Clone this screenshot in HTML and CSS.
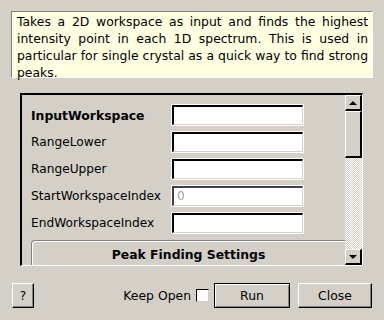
FILE: index.html
```html
<!DOCTYPE html>
<html lang="en">
<head>
    <meta charset="UTF-8">
    <title>FindPeaks dialog</title>
    <link rel="stylesheet" href="styles.css">
</head>
<body>

<div class="dialog">
    <div class="desc">
        Takes a 2D workspace as input and finds the highest intensity point in each 1D spectrum. This is used in particular for single crystal as a quick way to find strong peaks.
    </div>

    <div class="panel">
        <div class="rows">
            <div class="row">
                <label class="bold">InputWorkspace</label>
                <div class="field"></div>
            </div>
            <div class="row">
                <label>RangeLower</label>
                <div class="field"></div>
            </div>
            <div class="row">
                <label>RangeUpper</label>
                <div class="field"></div>
            </div>
            <div class="row">
                <label>StartWorkspaceIndex</label>
                <div class="field placeholder">0</div>
            </div>
            <div class="row">
                <label>EndWorkspaceIndex</label>
                <div class="field"></div>
            </div>
            <div class="group">
                <div class="group-title">Peak Finding Settings</div>
            </div>
        </div>
        <div class="scrollbar">
            <div class="arrow up"><span></span></div>
            <div class="thumb"></div>
            <div class="track"></div>
            <div class="arrow down"><span></span></div>
        </div>
    </div>

    <div class="footer">
        <button class="btn help">?</button>
        <div class="spacer"></div>
        <span class="keep">Keep Open</span>
        <span class="check"></span>
        <button class="btn default">Run</button>
        <button class="btn close">Close</button>
    </div>
</div>

</body>
</html>
```

FILE: styles.css
```css
body {
    margin: 0;
    background: #d4d0c8;
    font-family: "DejaVu Sans", sans-serif;
    font-size: 12px;
    color: #000;
}
.dialog {
    width: 384px;
    height: 320px;
    padding: 11px 0 0 11px;
    box-sizing: border-box;
}
.desc {
    width: 362px;
    height: 67px;
    box-sizing: border-box;
    background: #ffffe1;
    border-top: 1px solid #808080;
    border-left: 1px solid #808080;
    border-right: 1px solid #fff;
    border-bottom: 1px solid #fff;
    padding: 1px 4px 0 5px;
    line-height: 17px;
    text-align: justify;
    font-size: 12.4px;
}
.panel {
    margin: 15px 0 0 9px;
    width: 343px;
    height: 173px;
    box-sizing: border-box;
    border-top: 2px solid #000;
    border-left: 2px solid #000;
    border-right: 1px solid #fff;
    border-bottom: 1px solid #fff;
    display: flex;
    overflow: hidden;
}
.rows {
    flex: 1;
    padding: 10px 0 0 9px;
    overflow: hidden;
}
.row {
    display: flex;
    align-items: center;
    height: 20px;
    margin-bottom: 7px;
    font-size: 12.2px;
}
.row label {
    width: 141px;
}
.bold {
    font-weight: bold;
    font-size: 12.4px;
}
.field {
    width: 131px;
    height: 20px;
    box-sizing: border-box;
    background: #fff;
    border-top: 2px solid #000;
    border-left: 2px solid #000;
    border-right: 1px solid #d4d0c8;
    border-bottom: 1px solid #d4d0c8;
    outline: 1px solid #fff;
    font-size: 12px;
    line-height: 17px;
    padding-left: 3px;
}
.placeholder {
    color: #a0a0a0;
    border-top-color: #404040;
    border-left-color: #404040;
}
.group {
    margin-top: 7px;
    width: 314px;
    height: 40px;
    box-sizing: border-box;
    border-top: 1px solid #808080;
    border-left: 1px solid #808080;
    border-top-left-radius: 4px;
    box-shadow: inset 1px 1px 0 #fff;
}
.group-title {
    text-align: center;
    font-weight: bold;
    font-size: 12.4px;
    padding-top: 6px;
}
.scrollbar {
    width: 17px;
    display: flex;
    flex-direction: column;
}
.arrow {
    height: 16px;
    box-sizing: border-box;
    background: #d4d0c8;
    border-top: 1px solid #fff;
    border-left: 1px solid #fff;
    border-right: 2px solid #000;
    border-bottom: 2px solid #000;
    display: flex;
    align-items: center;
    justify-content: center;
}
.arrow span {
    width: 0;
    height: 0;
    border-left: 4px solid transparent;
    border-right: 4px solid transparent;
}
.up span {
    border-bottom: 4px solid #000;
}
.down span {
    border-top: 4px solid #000;
}
.thumb {
    height: 47px;
    box-sizing: border-box;
    background: #d4d0c8;
    border-top: 1px solid #fff;
    border-left: 1px solid #fff;
    border-right: 2px solid #000;
    border-bottom: 2px solid #000;
}
.track {
    flex: 1;
    background: repeating-conic-gradient(#fff 0 25%, #d4d0c8 0 50%) 0 0 / 2px 2px;
}
.footer {
    display: flex;
    align-items: center;
    margin-top: 17px;
    width: 361px;
}
.spacer {
    flex: 1;
}
.btn {
    height: 25px;
    box-sizing: border-box;
    background: #d4d0c8;
    border-top: 1px solid #fff;
    border-left: 1px solid #fff;
    border-right: 1px solid #000;
    border-bottom: 1px solid #000;
    box-shadow: inset -1px -1px 0 #808080;
    font-family: "DejaVu Sans", sans-serif;
    font-size: 12.4px;
    color: #000;
    padding: 0;
    margin: 0;
}
.help {
    width: 22px;
    margin-left: 1px;
    font-size: 12px;
}
.keep {
    font-size: 12.4px;
}
.check {
    width: 13px;
    height: 13px;
    box-sizing: border-box;
    background: #fff;
    border-top: 1px solid #000;
    border-left: 1px solid #000;
    border-right: 1px solid #d4d0c8;
    border-bottom: 1px solid #d4d0c8;
    margin: 0 5px 0 5px;
}
.default {
    width: 76px;
    border: 1px solid #000;
    box-shadow: inset 1px 1px 0 #fff, inset -1px -1px 0 #808080;
}
.close {
    width: 74px;
    margin-left: 8px;
}
```
